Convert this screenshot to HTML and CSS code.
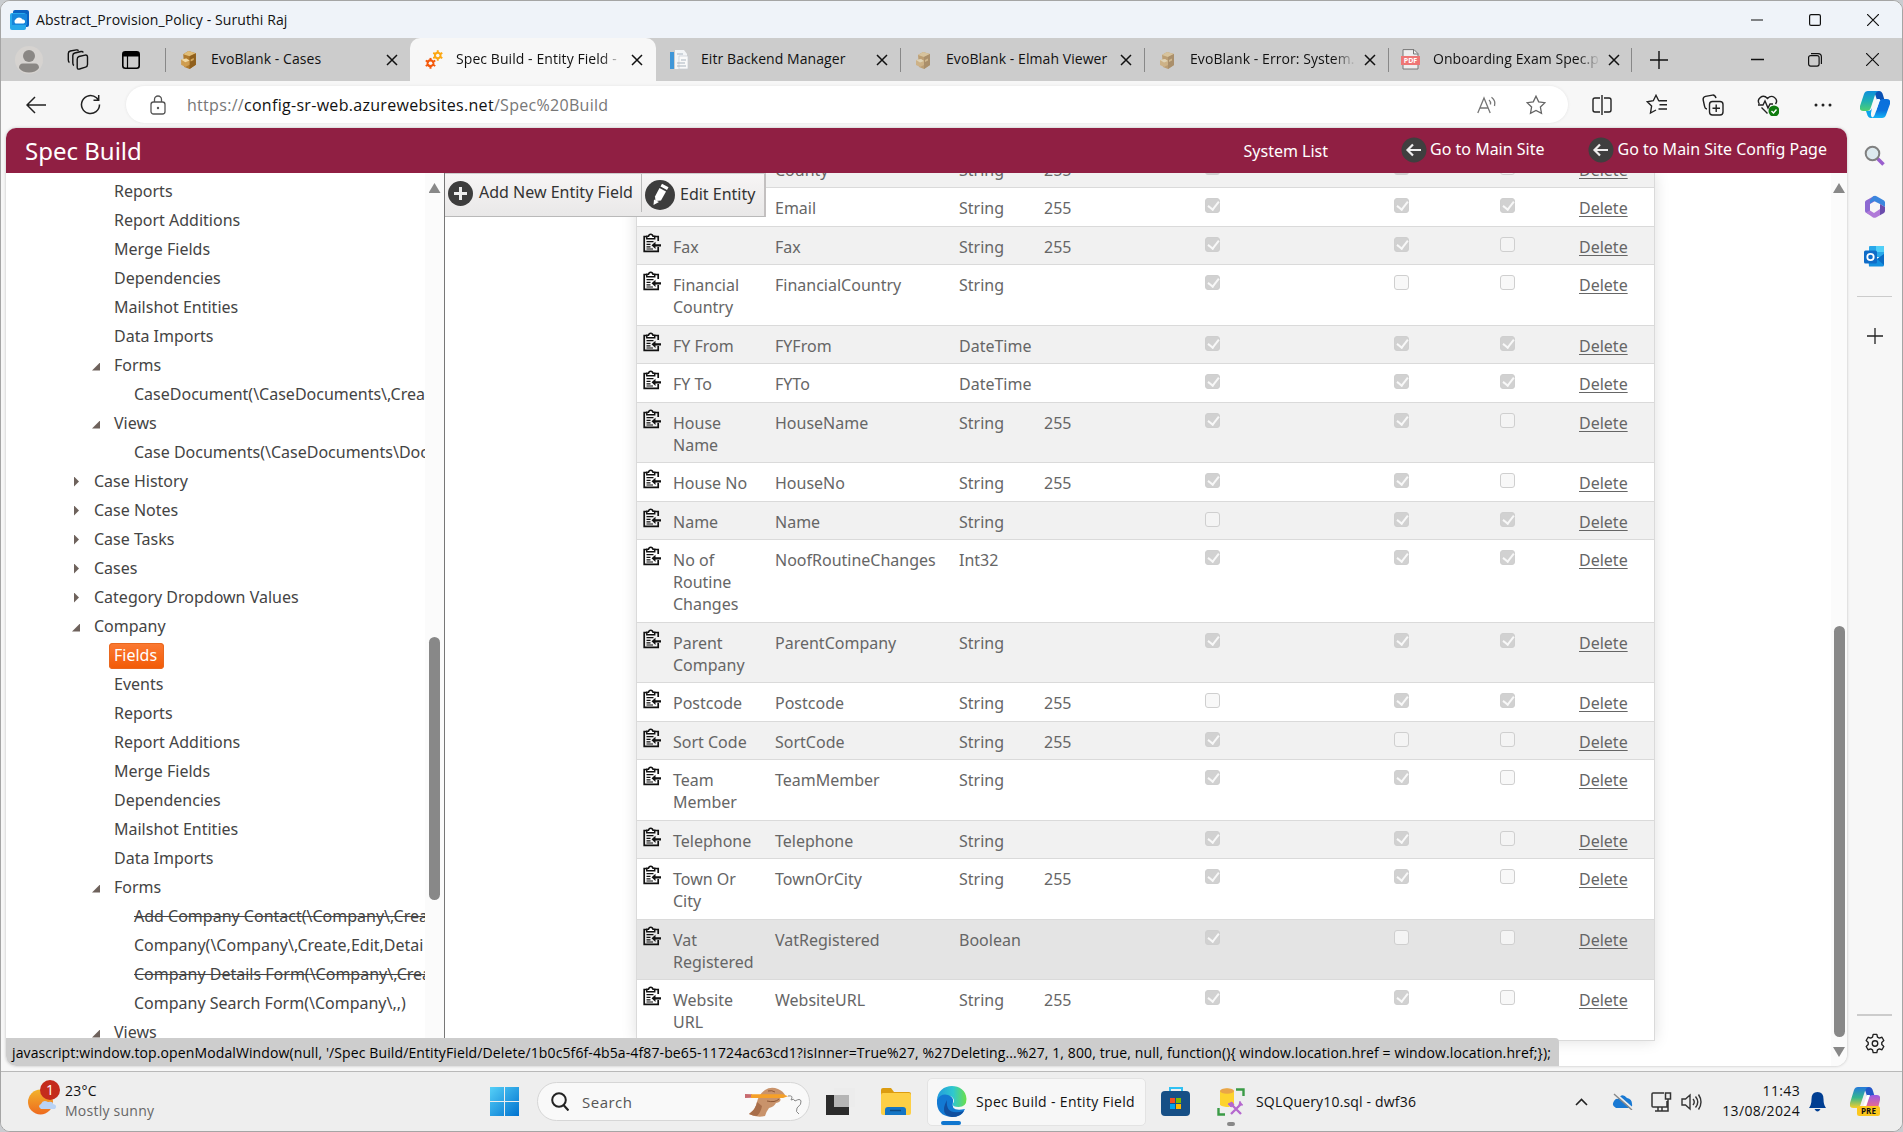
FILE: index.html
```html
<!DOCTYPE html>
<html lang="en">
<head>
<meta charset="utf-8">
<title>Spec Build - Entity Field</title>
<link rel="stylesheet" href="styles.css">
</head>
<body>
<svg class="defs" width="0" height="0">
  <symbol id="clip" viewBox="0 0 18 20"><path d="M3.5 3.5H1.2v14.8h14V14M11.500 3.500h3.700V8" fill="none" stroke="#111" stroke-width="1.7"/><path d="M3.800 5.800V3.300h1.700C6 .4 9.500.4 10 3.300h1.700v2.500z" fill="#fff" stroke="#111" stroke-width="1.500"/><path d="M3.500 8.700h7M3.500 11.300h4M3.500 13.800h4M3.500 16h6.500" stroke="#111" stroke-width="1.200"/><path d="M8.500 12.300l4-3.500v2.400H18v2.400h-5.500V16z" fill="#111"/></symbol>
  <symbol id="x" viewBox="0 0 12 12"><path d="M1 1l10 10M11 1L1 11" fill="none" stroke="#111" stroke-width="1.500"/></symbol>
  <symbol id="box" viewBox="0 0 16 18"><path d="M3 4l5-3 7 2v11l-6 4-5-2z" fill="#b07a2c"/><path d="M3 4l5-3 7 2-6 3z" fill="#e0bd78"/><path d="M9 6l6-3v11l-6 4z" fill="#8f5f1c"/><path d="M1 9l5-1 3 2v4l-4 2-4-2z" fill="#cf9d4f"/><path d="M1 9l5-1 3 2-4 1.500z" fill="#f0d9a4"/><path d="M10 9l3-1.500v2L10 11z" fill="#d4a85d"/></symbol>
  <symbol id="back" viewBox="0 0 26 26"><circle cx="13" cy="13" r="12.500" fill="#3f3f3f"/><path d="M20 13H7M12 7.500L6.500 13l5.500 5.500" fill="none" stroke="#eee" stroke-width="2.200"/></symbol>
  <symbol id="gear" viewBox="0 0 24 24"><path d="M10 2h4l.7 3 2 1.100 2.900-.9 2 3.500-2.200 2.100v2.400l2.200 2.100-2 3.500-2.900-.9-2 1.100L14 22h-4l-.7-3-2-1.100-2.900.9-2-3.500 2.200-2.100v-2.400L2.400 8.700l2-3.500 2.900.9 2-1.100z" fill="none" stroke="currentColor" stroke-width="1.500" stroke-linejoin="round"/><circle cx="12" cy="12" r="3" fill="none" stroke="currentColor" stroke-width="1.500"/></symbol>
  <symbol id="cog" viewBox="0 0 12 12"><path d="M6 0v12M.8 3l10.400 6M.8 9l10.400-6" stroke="currentColor" stroke-width="2.200"/><circle cx="6" cy="6" r="3.200" fill="none" stroke="currentColor" stroke-width="2.200"/><circle cx="6" cy="6" r="2" fill="#f7f7f7"/></symbol>
</svg>
<div class="window">
  <header class="titlebar">
    <svg class="app-icon" width="20" height="20" viewBox="0 0 20 20"><rect x="3" width="16" height="17" rx="2" fill="#0a62c2"/><rect y="3" width="16" height="17" rx="2" fill="#27a8ea"/><path d="M2 4h15v11H2z" fill="#1686dc"/><path d="M5.500 13.500a2.500 2.500 0 010-4 4 4 0 017 0 2 2 0 011 4z" fill="#fff"/></svg>
    <span class="title-text">Abstract_Provision_Policy - Suruthi Raj</span>
    <div class="controls">
      <svg width="12" height="12" viewBox="0 0 12 12"><path d="M0 6h12" stroke="#111" stroke-width="1.200"/></svg>
      <svg width="12" height="12" viewBox="0 0 12 12"><rect x=".6" y=".6" width="10.800" height="10.800" rx="1.500" fill="none" stroke="#111" stroke-width="1.200"/></svg>
      <svg width="12" height="12" viewBox="0 0 12 12"><path d="M0 0l12 12M12 0L0 12" stroke="#111" stroke-width="1.200"/></svg>
    </div>
  </header>

  <nav class="tabs">
    <div class="tab-tools">
      <svg width="28" height="28" viewBox="0 0 28 28"><circle cx="14" cy="14" r="14" fill="#d6d3d0"/><circle cx="14" cy="10" r="6" fill="#8a8784"/><path d="M4 22q0-4.500 4-4.500h12q4 0 4 4.500c-4 6-16 6-20 0z" fill="#8a8784"/></svg>
      <svg width="22" height="22" viewBox="0 0 22 22" fill="none" stroke="#111" stroke-width="1.400"><path d="M12 7.500l6-1.400q2.500-.4 2.500 2v7.400q0 2-2 2.700l-6 1.800q-2.300.6-2.300-1.800v-8q0-2.200 1.800-2.700z"/><path d="M7 16.500q-1.200-.5-1.200-2.500V6.500q0-2 2-2.500L14 2.500q1.700-.3 2.300 1M2.500 13.500Q1.300 13 1.300 11V4.500q0-2 2-2.500L9.500.9q1.500-.2 2 .8"/></svg>
      <svg width="18" height="18" viewBox="0 0 18 18"><rect x=".8" y=".8" width="16.400" height="16.400" rx="2.500" fill="none" stroke="#000" stroke-width="1.600"/><path d="M1 1h16v4.500H1z"/><path d="M5.500 5v12" stroke="#000" stroke-width="1.200"/></svg>
    </div>
    <div class="tab first"><svg class="fav" width="17" height="19"><use href="#box"/></svg><span class="tab-label">EvoBlank - Cases</span><svg class="close" width="12" height="12"><use href="#x"/></svg></div>
    <div class="tab active"><svg class="fav" width="18" height="19" viewBox="0 0 18 19"><svg x="7.500" width="10.500" height="11" class="yellow"><use href="#cog"/></svg><svg y="7.500" width="11" height="11.500" class="orange"><use href="#cog"/></svg></svg><span class="tab-label fade">Spec Build - Entity Field -</span><svg class="close" width="12" height="12"><use href="#x"/></svg></div>
    <div class="tab third"><svg class="fav" width="20" height="20" viewBox="0 0 20 20"><path d="M6 0h9l3 4v15H6z" fill="#f3f5f7"/><path d="M10 6h9v13h-9z" fill="#fafafa" stroke="#c5ccd2" stroke-width=".7"/><path d="M1 2h4v17H1z" fill="#3e96d8"/><path d="M8 4h6M12 10h5M8 13h8M8 16h9" stroke="#a9b4bf"/></svg><span class="tab-label">Eitr Backend Manager</span><svg class="close" width="12" height="12"><use href="#x"/></svg></div>
    <div class="tab idle"><svg class="fav" width="16" height="18"><use href="#box"/></svg><span class="tab-label">EvoBlank - Elmah Viewer</span><svg class="close" width="12" height="12"><use href="#x"/></svg></div>
    <div class="tab idle"><svg class="fav" width="16" height="18"><use href="#box"/></svg><span class="tab-label fade">EvoBlank - Error: System.</span><svg class="close" width="12" height="12"><use href="#x"/></svg></div>
    <div class="tab pdf"><svg class="fav" width="19" height="21" viewBox="0 0 19 21"><path d="M2 .6h11l4 4V20H2z" fill="#eee" stroke="#777"/><path d="M12.500.6V5H17" fill="none" stroke="#777"/><path d="M0 7h19v9H0z" fill="#ee7675"/><text x="9.500" y="14.200" text-anchor="middle" class="pdf-text">PDF</text></svg><span class="tab-label fade">Onboarding Exam Spec.p</span><svg class="close" width="12" height="12"><use href="#x"/></svg></div>
    <svg class="newtab" width="18" height="18" viewBox="0 0 18 18"><path d="M9 0v18M0 9h18" stroke="#111" stroke-width="1.400"/></svg>
    <div class="controls inner">
      <svg width="13" height="13" viewBox="0 0 12 12"><path d="M0 6h12" stroke="#111" stroke-width="1.200"/></svg>
      <svg width="14" height="14" viewBox="0 0 14 14" fill="none" stroke="#111" stroke-width="1.200"><rect x=".6" y="2.600" width="10.500" height="10.500" rx="2"/><path d="M3 .7h7q3.400 0 3.400 3.400V11"/></svg>
      <svg width="13" height="13" viewBox="0 0 12 12"><path d="M0 0l12 12M12 0L0 12" stroke="#111" stroke-width="1.100"/></svg>
    </div>
  </nav>

  <div class="address-row">
    <svg class="nav-back" width="20" height="18" viewBox="0 0 20 18"><path d="M20 9H1M9 1L1 9l8 8" fill="none" stroke="#222" stroke-width="1.500"/></svg>
    <svg class="nav-reload" width="21" height="21" viewBox="0 0 21 21"><path d="M19.500 10.500a9 9 0 11-3-6.700l2 2.200M18.700 1v5.200h-5.200" fill="none" stroke="#222" stroke-width="1.500"/></svg>
    <div class="address">
      <svg width="16" height="20" viewBox="0 0 16 20"><rect x="1" y="7" width="14" height="12" rx="2.500" fill="none" stroke="#555" stroke-width="1.300"/><path d="M4.500 7V4.500a3.500 3.500 0 017 0V7" fill="none" stroke="#555" stroke-width="1.300"/><circle cx="8" cy="13" r="1.200" fill="#555"/></svg>
      <span class="url">https://<b>config-sr-web.azurewebsites.net</b>/Spec%20Build</span>
      <svg class="read" width="20" height="18" viewBox="0 0 20 18" fill="none" stroke="#777" stroke-width="1.300"><path d="M.8 17L7 2l6.200 15M3 12h8M12 4q2 1.500 1.500 4.500M14.500 1.200q4.500 3.300 3 8.800"/></svg>
      <svg width="20" height="20" viewBox="0 0 20 20"><path d="M10 1.200l2.700 5.700 6.200.8-4.500 4.400 1.100 6.300-5.500-3-5.500 3 1.100-6.300L1.100 7.700l6.200-.8z" fill="none" stroke="#666" stroke-width="1.300"/></svg>
    </div>
    <div class="browser-tools">
      <svg viewBox="0 0 22 22"><path d="M9 4H4Q2 4 2 6v10q0 2 2 2h5M13 4h5q2 0 2 2v10q0 2-2 2h-5M11 1v20"/></svg>
      <svg viewBox="0 0 22 22"><path d="M14 7l-1.300-.3L10 1.300 7.300 6.700 1.300 7.800l4.300 4.300L4.500 19l5.500-3M13.500 10.800H21M13.500 6.800H21M12.500 15H21"/></svg>
      <svg viewBox="0 0 22 22"><rect x="7.500" y="7.500" width="13.500" height="13.500" rx="3"/><path d="M14.200 10.500v7.500M10.500 14.200H18M5 15q-2 0-2.500-3L1.200 6q-.5-3 2.300-3.600l7-1.300q2.500-.4 3.500 3"/></svg>
      <svg viewBox="0 0 22 22"><path d="M2.300 10C-1 4.500 6-.5 10.500 4.500 15-.5 22 5 18.500 10M1 11h5l2-4 3 7 2-4h3M4.500 13.500l6 6"/><circle cx="17" cy="17" r="5.500" fill="#0f7b0f" stroke="none"/><path d="M14.500 17l2 2 3-3.500" stroke="#fff"/></svg>
      <svg viewBox="0 0 22 22"><g fill="#222" stroke="none"><circle cx="4" cy="11" r="1.500"/><circle cx="11" cy="11" r="1.500"/><circle cx="18" cy="11" r="1.500"/></g></svg>
    </div>
    <svg class="copilot" width="30" height="27" viewBox="0 0 30 27"><defs><linearGradient id="g1" x2="0" y2="1"><stop stop-color="#0e8fdc"/><stop offset=".5" stop-color="#1fb0b4"/><stop offset="1" stop-color="#4fd070"/></linearGradient><linearGradient id="g2" x2="0" y2="1"><stop stop-color="#0b70dc"/><stop offset=".6" stop-color="#0b73dd"/><stop offset="1" stop-color="#15b4f5"/></linearGradient></defs><path d="M14 0h5q3 0 4 4l1.500 5H17z" fill="#0b52b4"/><path d="M4 3q1-3 4-3h11q-3 .5-4 4l-4 12q-1 4-4 4H3q-4 0-3-5z" fill="url(#g1)"/><path d="M26 24q-1 3-4 3H11q3-.5 4-4l4-11q1-4 4-4h4q4 0 3 5z" fill="url(#g2)"/><path d="M6 20h2q3 0 4-3l-1 5q-.5 4 2 5h-2q-3 0-4-4z" fill="#0ba5ec"/><path d="M17 8h3l-4 12h-3z" fill="#f0faff"/></svg>
  </div>

  <div class="workspace">
    <div class="page">
      <div class="site-header">
        <h1>Spec Build</h1>
        <a class="syslist">System List</a>
        <a class="mainsite"><svg width="26" height="26"><use href="#back"/></svg><span>Go to Main Site</span></a>
        <a class="configpage"><svg width="26" height="26"><use href="#back"/></svg><span>Go to Main Site Config Page</span></a>
      </div>
      <div class="site-body">
        <aside class="tree-pane">
          <ul class="tree">
            <li class="l2">Reports</li><li class="l2">Report Additions</li><li class="l2">Merge Fields</li><li class="l2">Dependencies</li><li class="l2">Mailshot Entities</li><li class="l2">Data Imports</li>
            <li class="l2 open">Forms</li><li class="l3">CaseDocument(\CaseDocuments\,Crea</li>
            <li class="l2 open">Views</li><li class="l3">Case Documents(\CaseDocuments\Doc</li>
            <li class="l1 shut">Case History</li><li class="l1 shut">Case Notes</li><li class="l1 shut">Case Tasks</li><li class="l1 shut">Cases</li><li class="l1 shut">Category Dropdown Values</li>
            <li class="l1 open">Company</li>
            <li class="l2"><span class="selected">Fields</span></li><li class="l2">Events</li><li class="l2">Reports</li><li class="l2">Report Additions</li><li class="l2">Merge Fields</li><li class="l2">Dependencies</li><li class="l2">Mailshot Entities</li><li class="l2">Data Imports</li>
            <li class="l2 open">Forms</li><li class="l3"><s>Add Company Contact(\Company\,Crea</s></li><li class="l3">Company(\Company\,Create,Edit,Detai</li><li class="l3"><s>Company Details Form(\Company\,Crea</s></li><li class="l3">Company Search Form(\Company\,,)</li>
            <li class="l2 open">Views</li>
          </ul>
          <div class="scroll tree-scroll"><i class="up"></i><i class="thumb"></i></div>
        </aside>
        <main class="main">
          <div class="grid">
            <div class="row alt h38 cut"><span></span><span></span><span>County</span><span>String</span><span>255</span><i class="cb on"></i><i class="cb on"></i><i class="cb"></i><a>Delete</a></div>
            <div class="row h39"><span></span><span></span><span>Email</span><span>String</span><span>255</span><i class="cb on"></i><i class="cb on"></i><i class="cb on"></i><a>Delete</a></div>
            <div class="row alt h38"><svg><use href="#clip"/></svg><span>Fax</span><span>Fax</span><span>String</span><span>255</span><i class="cb on"></i><i class="cb on"></i><i class="cb"></i><a>Delete</a></div>
            <div class="row h61"><svg><use href="#clip"/></svg><span>Financial Country</span><span>FinancialCountry</span><span>String</span><span></span><i class="cb on"></i><i class="cb"></i><i class="cb"></i><a>Delete</a></div>
            <div class="row alt h38"><svg><use href="#clip"/></svg><span>FY From</span><span>FYFrom</span><span>DateTime</span><span></span><i class="cb on"></i><i class="cb on"></i><i class="cb on"></i><a>Delete</a></div>
            <div class="row h39"><svg><use href="#clip"/></svg><span>FY To</span><span>FYTo</span><span>DateTime</span><span></span><i class="cb on"></i><i class="cb on"></i><i class="cb on"></i><a>Delete</a></div>
            <div class="row alt h60"><svg><use href="#clip"/></svg><span>House Name</span><span>HouseName</span><span>String</span><span>255</span><i class="cb on"></i><i class="cb on"></i><i class="cb"></i><a>Delete</a></div>
            <div class="row h39"><svg><use href="#clip"/></svg><span>House No</span><span>HouseNo</span><span>String</span><span>255</span><i class="cb on"></i><i class="cb on"></i><i class="cb"></i><a>Delete</a></div>
            <div class="row alt h38"><svg><use href="#clip"/></svg><span>Name</span><span>Name</span><span>String</span><span></span><i class="cb"></i><i class="cb on"></i><i class="cb on"></i><a>Delete</a></div>
            <div class="row h83"><svg><use href="#clip"/></svg><span>No of Routine Changes</span><span>NoofRoutineChanges</span><span>Int32</span><span></span><i class="cb on"></i><i class="cb on"></i><i class="cb on"></i><a>Delete</a></div>
            <div class="row alt h60"><svg><use href="#clip"/></svg><span>Parent Company</span><span>ParentCompany</span><span>String</span><span></span><i class="cb on"></i><i class="cb on"></i><i class="cb on"></i><a>Delete</a></div>
            <div class="row h39"><svg><use href="#clip"/></svg><span>Postcode</span><span>Postcode</span><span>String</span><span>255</span><i class="cb"></i><i class="cb on"></i><i class="cb on"></i><a>Delete</a></div>
            <div class="row alt h38"><svg><use href="#clip"/></svg><span>Sort Code</span><span>SortCode</span><span>String</span><span>255</span><i class="cb on"></i><i class="cb"></i><i class="cb"></i><a>Delete</a></div>
            <div class="row h61"><svg><use href="#clip"/></svg><span>Team Member</span><span>TeamMember</span><span>String</span><span></span><i class="cb on"></i><i class="cb on"></i><i class="cb"></i><a>Delete</a></div>
            <div class="row alt h38"><svg><use href="#clip"/></svg><span>Telephone</span><span>Telephone</span><span>String</span><span></span><i class="cb on"></i><i class="cb on"></i><i class="cb"></i><a>Delete</a></div>
            <div class="row h61"><svg><use href="#clip"/></svg><span>Town Or City</span><span>TownOrCity</span><span>String</span><span>255</span><i class="cb on"></i><i class="cb on"></i><i class="cb"></i><a>Delete</a></div>
            <div class="row hover h60"><svg><use href="#clip"/></svg><span>Vat Registered</span><span>VatRegistered</span><span>Boolean</span><span></span><i class="cb on"></i><i class="cb"></i><i class="cb"></i><a>Delete</a></div>
            <div class="row h61"><svg><use href="#clip"/></svg><span>Website URL</span><span>WebsiteURL</span><span>String</span><span>255</span><i class="cb on"></i><i class="cb on"></i><i class="cb"></i><a>Delete</a></div>
          </div>
          <div class="toolbar">
            <div class="tool add"><svg width="25" height="25" viewBox="0 0 25 25"><circle cx="12.500" cy="12.500" r="12.500" fill="#3d3d3d"/><path d="M12.500 6v13M6 12.500h13" stroke="#eee" stroke-width="3"/></svg><span>Add New Entity Field</span></div>
            <div class="tool edit"><svg width="30" height="30" viewBox="0 0 30 30"><circle cx="15" cy="15" r="15" fill="#3d3d3d"/><path d="M10 16.500l4.500-8.500 6.500 3.500-5 9-5.500.5z" fill="#fff"/><path d="M9 19.500l5 2.500L8.500 25zM15.500 6.500L17 3.800l6.500 3.500-1.500 2.700z" fill="#fff"/></svg><span>Edit Entity</span></div>
          </div>
          <div class="scroll main-scroll"><i class="up"></i><i class="thumb"></i><i class="down"></i></div>
        </main>
      </div>
      <div class="status">javascript:window.top.openModalWindow(null, '/Spec Build/EntityField/Delete/1b0c5f6f-4b5a-4f87-be65-11724ac63cd1?isInner=True%27, %27Deleting...%27, 1, 800, true, null, function(){ window.location.href = window.location.href;});</div>
    </div>
    <aside class="sidebar">
      <svg width="22" height="22" viewBox="0 0 22 22"><path d="M13 13l6.500 6.500" stroke="#9a5fce" stroke-width="3.500"/><circle cx="8.500" cy="8.500" r="6.800" fill="#dde9ee" stroke="#808080" stroke-width="2"/></svg>
      <svg width="22" height="23" viewBox="0 0 22 23"><path d="M10 1L2 5.500Q1 6 1 7.500V16q0 1.500 1.500 2L6 20V9l6-3.500z" fill="#8d6ad2"/><path d="M9 1.500q2-1.500 4 0L20 5.500q1 .8 1 2V12l-5-3-6-3-4 2.500V5z" fill="#3b86de"/><path d="M16 9l5 3v4q0 1.200-1 2l-4 2.300V14z" fill="#6b4cad"/><path d="M2 17.500l4-2 4 2.500 6-4v6.300l-4 2.200q-1.500.7-3 0z" fill="#b07ad8"/><circle cx="11" cy="11.800" r="3.900" fill="#f7f7f7"/></svg>
      <svg width="21" height="21" viewBox="0 0 21 21"><path d="M5 1q0-1 1-1h13q1 0 1 1v10H5z" fill="#29a8ea"/><path d="M12 0h7q1 0 1 1v5h-8z" fill="#50d0f8"/><path d="M4 9l9 4 7-5v11q0 1.500-1.500 1.500H5z" fill="#1490df"/><path d="M13 13l7 6V8z" fill="#0b6cc4"/><rect y="4.500" width="13" height="13" rx="1.500" fill="#0f6cc8"/><circle cx="6.500" cy="11" r="3.200" fill="none" stroke="#fff" stroke-width="1.800"/></svg>
      <hr>
      <svg width="16" height="16" viewBox="0 0 16 16"><path d="M8 0v16M0 8h16" stroke="#222" stroke-width="1.300"/></svg>
      <hr class="low">
      <svg class="settings" width="22" height="23"><use href="#gear"/></svg>
    </aside>
  </div>

  <footer class="taskbar">
    <svg class="weather" width="32" height="36" viewBox="0 0 32 36"><defs><linearGradient id="sun" x2="0" y2="1"><stop stop-color="#f2b32c"/><stop offset="1" stop-color="#ee6a1e"/></linearGradient></defs><circle cx="12.500" cy="22" r="12.500" fill="url(#sun)"/><path d="M13 29q-4-3 0-5 2-5 7-2 5-1 5 2 5 1 2 5z" fill="#b9d3f5"/><circle cx="22" cy="10" r="10" fill="#c42b1c"/><text x="22" y="14.500" text-anchor="middle" class="badge">1</text></svg>
    <div class="forecast"><span>23°C</span><span class="muted">Mostly sunny</span></div>
    <svg class="start" width="29" height="29" viewBox="0 0 29 29"><defs><linearGradient id="win" x2="1" y2="1"><stop stop-color="#55d0f8"/><stop offset="1" stop-color="#0072cf"/></linearGradient></defs><path d="M0 0h14v14H0zM15 0h14v14H15zM0 15h14v14H0zM15 15h14v14H15z" fill="url(#win)"/></svg>
    <div class="search">
      <svg width="18" height="19" viewBox="0 0 18 19"><circle cx="8" cy="8" r="6.800" fill="none" stroke="#222" stroke-width="2"/><path d="M12.500 13l5 5.500" stroke="#222" stroke-width="2.200"/></svg>
      <span>Search</span>
      <svg class="hand" width="57" height="30" viewBox="0 0 57 30"><path d="M4 27q7-5 8-12 2-8 8-12 6-4 13-1 5 2 7 6-1 3-5 3 2 4-4 5-2 4-7 5-3 4-4 8-8 2-16-2z" fill="#c9936b"/><path d="M4 27q7-5 8-12l5 4q-1 6-5 10-4 0-8-2z" fill="#a86e4a"/><path d="M23 4q4-1 7 1M22 14q8 2 12-2" stroke="#8d5736" fill="none"/><path d="M0 7l7 .2v3.600L0 11z" fill="#c86b70"/><path d="M6 7.200l32 0 5 2-5 1.800H6z" fill="#f5a029"/><path d="M43 9q6-1 3 4 3-2 4 1 5-3 6 0t-4 7q-2 4 2 6" fill="none" stroke="#888"/></svg>
    </div>
    <svg class="taskview" width="29" height="29" viewBox="0 0 29 29"><path d="M0 8h23v20H0z" fill="#2b2b2b"/><path d="M8 1h21v19H8z" fill="#ececec"/><path d="M8 8h15v12H8z" fill="#b5b5b5"/></svg>
    <svg class="folder" width="30" height="28" viewBox="0 0 30 28"><path d="M0 2q0-2 2-2h8l3 4h15q2 0 2 2v8H0z" fill="#dc9c10"/><rect y="5" width="30" height="22" rx="2" fill="#fdcf45"/><path d="M4 27v-5q0-3 3-3h15q3 0 3 3v5z" fill="#1475c4"/><path d="M9 22.500h11" stroke="#0c4b84" stroke-width="1.500"/></svg>
    <div class="task-active">
      <svg width="31" height="31" viewBox="0 0 31 31"><defs><linearGradient id="e1"><stop stop-color="#239bdd"/><stop offset=".55" stop-color="#2fc8cf"/><stop offset="1" stop-color="#6be048"/></linearGradient></defs><path d="M1 15C1-5 30-4 30.500 13q0 8-8 8-6 0-6-3c3-3 1-8-4-8Q4 10 1 15z" fill="url(#e1)"/><path d="M1 14q4-7 11-5 6 2 5 7-3 10 12 7-3 8-13 8Q0 30 1 14z" fill="#1379d2"/><path d="M11 14q-2 16 17 11-4 6-12 6-13-2-5-17z" fill="#114f9e"/></svg>
      <span>Spec Build - Entity Field</span>
      <i></i>
    </div>
    <svg class="store" width="29" height="29" viewBox="0 0 29 29"><path d="M9 5V1h12v4" fill="none" stroke="#2fc1f3" stroke-width="2"/><rect y="4" width="29" height="25" rx="4" fill="#164f86"/><path d="M9 11h5v5H9z" fill="#f25022"/><path d="M15 11h5v5h-5z" fill="#7fba00"/><path d="M9 17h5v5H9z" fill="#00a4ef"/><path d="M15 17h5v5h-5z" fill="#ffb900"/></svg>
    <div class="ssms"><svg width="28" height="28" viewBox="0 0 28 28"><path d="M3 3q7-5 14 0v13l-5 3q-6 0-9-2z" fill="#fdd32e"/><ellipse cx="10" cy="3" rx="7" ry="2.800" fill="#e9a548"/><path d="M19 1.500h7.500V8M1.500 20v6.500H8" fill="none" stroke="#3a9b46" stroke-width="2.400"/><path d="M14 26l10-10M14 16l10 10" stroke="#b568ce" stroke-width="2.400"/><path d="M11 16l4-2 2 3-3 2zM23 13l-1 4 4 0" fill="#b568ce" stroke="#b568ce"/></svg><i></i></div>
    <span class="sql">SQLQuery10.sql - dwf36</span>
    <div class="tray">
      <svg class="chev" width="13" height="8" viewBox="0 0 13 8"><path d="M1 7l5.500-5.500L12 7" fill="none" stroke="#222" stroke-width="1.600"/></svg>
      <svg class="cloud" width="21" height="17" viewBox="0 0 21 17"><path d="M4 15q-5-2-2-7 2-3 4-2 4-7 9-1 5 1 5 6 1 4-4 4z" fill="#1979d3"/><path d="M4 1l16 14" stroke="#eee" stroke-width="2"/><path d="M2 1l18 16" stroke="#888" stroke-width="1.400"/></svg>
      <svg class="net" width="21" height="20" viewBox="0 0 21 20" fill="none" stroke="#333" stroke-width="1.500"><path d="M13 1H2Q1 1 1 2v12q0 1 1 1h14V9M4 19h10M7 15v4M11 15v4M14.500 1h5v6h-5zM17 7v12h-4"/></svg>
      <svg class="vol" width="21" height="18" viewBox="0 0 21 18" fill="none" stroke="#333" stroke-width="1.400"><path d="M1 6h3.500L9 2v14l-4.500-4H1zM12 6q2.500 3 0 6M14.500 3.500q4.500 5.500 0 11M17.500 1.500q5 7.500 0 15"/></svg>
      <div class="clock"><span>11:43</span><span>13/08/2024</span></div>
      <svg class="bell" width="17" height="20" viewBox="0 0 17 20"><path d="M8.500 0q6 0 6 7 0 6 2.500 9H0q2.500-3 2.500-9 0-7 6-7z" fill="#003e92"/><path d="M5.500 17h6q-3 5-6 0z" fill="#003e92"/></svg>
      <svg class="pre" width="30" height="29" viewBox="0 0 30 29"><defs><linearGradient id="p1" x2="0" y2="1"><stop stop-color="#2479dc"/><stop offset=".5" stop-color="#35b68e"/><stop offset="1" stop-color="#f6cf2a"/></linearGradient><linearGradient id="p2" x2="0" y2="1"><stop stop-color="#9a5ae6"/><stop offset="1" stop-color="#f26d83"/></linearGradient></defs><path d="M14 0h5q3 0 4 4l1.500 5H17z" fill="#2356c8"/><path d="M4 3q1-3 4-3h11q-3 .5-4 4l-4 12q-1 5-4 5H3q-4 0-3-5z" fill="url(#p1)"/><path d="M13 21l5-9q1-4 5-4h4q4 0 3 5l-2 8z" fill="url(#p2)"/><path d="M17 8h3l-4 12h-3z" fill="#fff"/><rect x="7" y="19" width="23" height="10" rx="2.500" fill="#fcc71d"/><text x="18.500" y="27.200" text-anchor="middle" class="pre-text">PRE</text></svg>
    </div>
  </footer>
</div>
</body>
</html>
```
FILE: styles.css
```css
* { box-sizing: border-box; }
body { margin: 0; background: #c9ccd0; font-family: "Open Sans", "Noto Sans", sans-serif; color: #111; overflow: hidden; }
.defs { display: block; height: 0; }
svg { flex: none; display: block; }
.window { display: flex; flex-direction: column; width: 1903px; height: 1132px; border: 1px solid #a5a5a5; border-radius: 10px; overflow: hidden; background: #f7f7f7; }

.titlebar { height: 37px; flex: none; display: flex; align-items: center; background: #eff3f9; padding-left: 9px; font-size: 14px; }
.title-text { margin-left: 6px; letter-spacing: .1px; white-space: nowrap; }
.controls { display: flex; gap: 46px; margin-left: auto; padding-right: 23px; align-items: center; }
.inner { gap: 44px; }

.tabs { height: 43px; flex: none; display: flex; align-items: center; background: #ccc; font-size: 14px; }
.tab-tools { display: flex; align-items: center; width: 165px; height: 24px; border-right: 1px solid #888; padding-left: 14px; gap: 25px; }
.tab-tools svg:nth-child(2) { margin-left: -1px; }
.tab-tools svg:nth-child(3) { margin-left: 8px; }
.tab { display: flex; align-items: center; height: 43px; width: 244px; padding-left: 15px; padding-right: 12px; }
.tab-label { flex: 1; min-width: 0; margin-left: 15px; margin-right: 8px; white-space: nowrap; letter-spacing: .07px; padding-bottom: 3px; }
.fade { mask-image: linear-gradient(to right, #000 calc(100% - 22px), transparent); }
.first { width: 244px; padding-left: 14px; border-bottom-right-radius: 10px; }
.first .tab-label { margin-left: 14px; }
.active { background: #f7f7f7; border-radius: 10px 10px 0 0; width: 246px; padding-right: 13px; }
.active .tab-label { margin-left: 13px; }
.third { padding-left: 13px; width: 244px; }
.third .tab-label { margin-left: 12px; }
.idle, .pdf { position: relative; }
.idle::before, .pdf::before, .pdf::after { content: ""; position: absolute; left: 0; top: 10px; width: 1px; height: 24px; background: #888; }
.pdf::after { left: auto; right: 0; }
.idle .fav { opacity: .55; }
.pdf { padding-left: 13px; }
.pdf .tab-label { margin-left: 13px; }
.pdf-text { font: bold 7px "Open Sans", sans-serif; fill: #fff; }
.yellow { color: #fca813; }
.orange { color: #f4590b; }
.newtab { margin-left: 18px; }

.address-row { height: 47px; flex: none; display: flex; align-items: center; padding-left: 25px; }
.nav-reload { margin-left: 34px; }
.address { display: flex; align-items: center; height: 37px; width: 1442px; margin-left: 25px; border-radius: 19px; background: #fff; padding: 0 22px 0 24px; box-shadow: 0 0 3px #e3e3e3; }
.url { margin-left: 21px; font-size: 16px; letter-spacing: .3px; color: #777; white-space: nowrap; }
.url b { font-weight: 400; color: #111; }
.read { margin-left: auto; margin-right: 29px; }
.browser-tools { display: flex; gap: 33.25px; margin-left: 23px; }
.browser-tools svg { width: 22px; height: 22px; fill: none; stroke: #222; stroke-width: 1.4; }
.copilot { margin-left: 26px; }

.workspace { height: 943px; flex: none; display: flex; padding-left: 5px; }
.page { width: 1841px; height: 938px; flex: none; border-radius: 10px 10px 12px 10px; overflow: hidden; background: #fff; box-shadow: 0 0 3px #bbb; font-family: "Noto Sans", sans-serif; font-size: 16px; position: relative; }
.site-header { height: 45px; background: #901f43; color: #fff; display: flex; align-items: center; white-space: nowrap; }
.site-header h1 { font-size: 24px; font-weight: 400; margin: 0 0 0 19px; line-height: 45px; }
.site-header a { display: flex; align-items: center; gap: 4px; padding-bottom: 1px; }
.site-header a span { padding-bottom: 3px; }
.site-header .syslist { margin-left: auto; padding: 0; }
.mainsite { margin-left: 73px; }
.mainsite span { margin-left: -1px; }
.configpage { margin-left: 43px; margin-right: 20px; }

.site-body { display: flex; height: 893px; }
.tree-pane { width: 439px; flex: none; display: flex; border-right: 1px solid #777; }
.tree { margin: 0; padding: 3px 0 0; list-style: none; width: 419px; overflow: hidden; color: #444; }
.tree li { height: 29px; line-height: 28px; white-space: nowrap; display: flex; align-items: center; }
.l1 { padding-left: 66px; }
.l2 { padding-left: 108px; }
.l3 { padding-left: 128px; }
.tree .l2.open { padding-left: 86px; }
.open::before { content: ""; width: 8px; height: 8px; margin: 4px 14px 0 0; background: #6e625c; clip-path: polygon(100% 0, 100% 100%, 0 100%); }
.shut::before { content: ""; width: 5px; height: 10px; margin: 2px 15px 0 2px; background: #6e625c; clip-path: polygon(0 0, 100% 50%, 0 100%); }
.selected { background: linear-gradient(#fb7a34, #f25a05); color: #fff; border-radius: 4px; padding: 0 7px 0 5px; margin: 2px 0 0 -5px; height: 26px; line-height: 24px; box-shadow: inset 0 0 0 1px #e9681f; }
.scroll { display: flex; flex-direction: column; align-items: center; }
.scroll .up { width: 12px; height: 10px; background: #888; clip-path: polygon(50% 0, 100% 100%, 0 100%); margin-top: 10px; }
.scroll .down { width: 12px; height: 10px; background: #888; clip-path: polygon(0 0, 100% 0, 50% 100%); margin-top: 10px; }
.scroll .thumb { width: 11px; border-radius: 6px; background: #888; }
.tree-scroll { width: 19px; background: #fbfbfb; }
.tree-scroll .thumb { height: 263px; margin-top: 444px; }

.main { flex: 1; position: relative; display: flex; justify-content: space-between; align-items: flex-start; padding-left: 191px; overflow: hidden; }
.toolbar { position: absolute; left: 0; top: 0; display: flex; width: 321px; height: 44px; background: linear-gradient(#f7f5f5, #e9e8e8); border-top: 1px solid #ccc; border-right: 2px solid #c3c0c0; border-bottom: 1px solid #b9b9b9; color: #333; white-space: nowrap; }
.tool { display: flex; align-items: center; }
.add { width: 197px; height: 38px; border-right: 1px solid #bbb; padding-left: 3px; gap: 6px; }
.add span { padding-bottom: 3px; }
.edit { padding-left: 3px; gap: 5px; height: 42px; }
.edit span { padding-bottom: 2px; }
.main-scroll { width: 16px; background: #fbfbfb; height: 893px; }
.main-scroll .thumb { height: 411px; margin-top: 433px; }
.grid { width: 1019px; border: 1px solid #dadada; border-top: 0; box-shadow: 0 0 14px rgba(0,0,0,.13); color: #666; }
.row { display: grid; grid-template-columns: 36px 102px 184px 85px 161px 189px 106px 79px 1fr; align-items: start; line-height: 22px; padding-top: 9px; border-top: 1px solid #dadada; background: #fff; }
.row > span { padding-right: 16px; }
.row > svg { width: 18px; height: 20px; margin: -3px 0 0 6px; }
.row > a { text-decoration: underline; text-underline-offset: 2px; }
.alt { background: #f1f1f1; }
.hover { background: #e4e4e4; }
.h38 { height: 38px; } .h39 { height: 39px; } .h60 { height: 60px; } .h61 { height: 61px; } .h83 { height: 83px; }
.cut { margin-top: -24px; }
.cb { width: 15px; height: 15px; margin-top: 1px; border: 1px solid #cfcfcf; border-radius: 3px; background: #f8f8f8; }
.alt .cb, .hover .cb { background: #f4f4f4; }
.row .cb.on { background: #d1d1d1; }
.cb.on::after { content: ""; display: block; width: 5px; height: 9px; margin: 0 0 0 4px; border: solid #f8f8f8; border-width: 0 2px 2px 0; transform: rotate(38deg); }
.status { position: absolute; left: 0; bottom: 0; height: 28px; width: 1553px; background: #cdcdcd; border-radius: 0 4px 0 8px; padding-left: 6px; font: 14px/29px "Open Sans", sans-serif; letter-spacing: .113px; color: #000; white-space: nowrap; }

.sidebar { flex: 1; display: flex; flex-direction: column; align-items: center; padding: 17px 0 16px; }
.sidebar svg:nth-child(2) { margin-top: 28px; }
.sidebar svg:nth-child(3) { margin-top: 28px; }
.sidebar hr { width: 35px; height: 1px; border: 0; margin: 29px 0 31px; background: #ccc; flex: none; }
.sidebar .low { margin: auto 0 16px; height: 2px; }
.settings { color: #222; }

.taskbar { flex: 1; display: flex; align-items: center; background: #eee; border-top: 1px solid #b9b9b9; font-size: 14px; padding-left: 27px; white-space: nowrap; }
.weather { margin-top: -8px; }
.badge { font: 14px "Open Sans", sans-serif; fill: #fff; }
.forecast { display: flex; flex-direction: column; line-height: 20px; width: 110px; margin: -2px 0 0 5px; letter-spacing: .25px; }
.forecast .muted { color: #666; }
.start { margin-left: 315px; }
.search { display: flex; align-items: center; width: 273px; height: 39px; margin-left: 18px; border: 1px solid #d6d6d6; border-radius: 20px; background: #f9f9f9; padding: 0 7px 0 13px; color: #555; font-size: 15px; }
.search span { margin-left: 13px; letter-spacing: .5px; }
.hand { margin-left: auto; }
.taskview { margin-left: 16px; }
.folder { margin-left: 26px; }
.task-active { position: relative; display: flex; align-items: center; width: 219px; height: 48px; margin-left: 16px; border: 1px solid #e3e3e3; border-radius: 5px; background: #f7f7f7; padding-left: 8px; gap: 9px; letter-spacing: .33px; }
.task-active i { position: absolute; left: 13px; bottom: 0; width: 20px; height: 4px; border-radius: 2px; background: #0f76cf; }
.store { margin-left: 15px; }
.ssms { position: relative; margin-left: 27px; }
.ssms i { position: absolute; left: 10px; bottom: -10px; width: 8px; height: 4px; border-radius: 2px; background: #888; }
.sql { margin-left: 11px; letter-spacing: .17px; }
.tray { display: flex; align-items: center; margin-left: auto; padding-right: 23px; }
.chev { margin-right: 1px; }
.cloud { margin-left: 23px; }
.net { margin-left: 18px; }
.vol { margin-left: 9px; }
.clock { display: flex; flex-direction: column; align-items: flex-end; line-height: 20px; width: 98px; margin-top: -2px; letter-spacing: .35px; }
.bell { margin-left: 9px; }
.pre { margin-left: 24px; margin-right: -1px; }
.pre-text { font: bold 8px "Open Sans", sans-serif; fill: #111; }
```
